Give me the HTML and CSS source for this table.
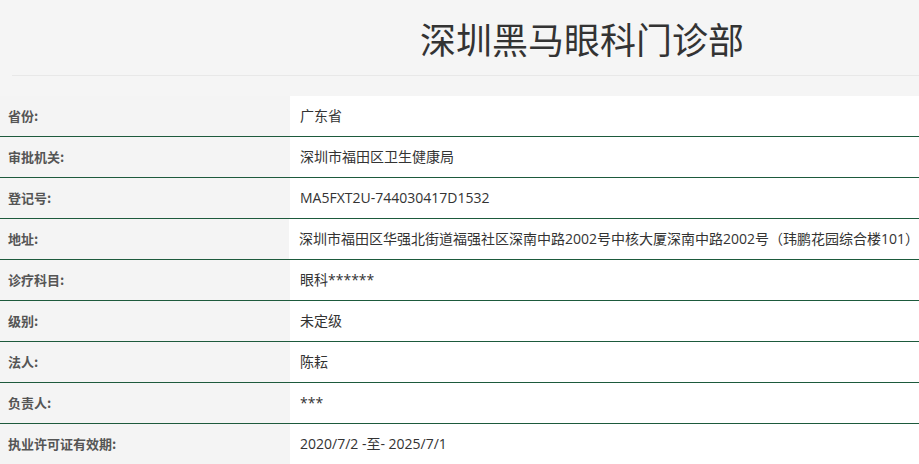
FILE: index.html
```html
<!DOCTYPE html>
<html lang="zh">
<head>
<meta charset="utf-8">
<link rel="stylesheet" href="styles.css">
</head>
<body>
<div class="page">
  <header class="head">
    <h1 class="title">深圳黑马眼科门诊部</h1>
    <div class="rule"></div>
  </header>
  <div class="table">
    <div class="row"><div class="k">省份:</div><div class="v">广东省</div></div>
    <div class="row"><div class="k">审批机关:</div><div class="v">深圳市福田区卫生健康局</div></div>
    <div class="row"><div class="k">登记号:</div><div class="v">MA5FXT2U-744030417D1532</div></div>
    <div class="row"><div class="k">地址:</div><div class="v">深圳市福田区华强北街道福强社区深南中路2002号中核大厦深南中路2002号（玮鹏花园综合楼101）</div></div>
    <div class="row"><div class="k">诊疗科目:</div><div class="v">眼科******</div></div>
    <div class="row"><div class="k">级别:</div><div class="v">未定级</div></div>
    <div class="row"><div class="k">法人:</div><div class="v">陈耘</div></div>
    <div class="row"><div class="k">负责人:</div><div class="v">***</div></div>
    <div class="row"><div class="k">执业许可证有效期:</div><div class="v">2020/7/2 -至- 2025/7/1</div></div>
  </div>
</div>
</body>
</html>
```
FILE: styles.css
```css
html, body {
  margin: 0;
  padding: 0;
  background: #f5f5f5;
}
body {
  font-family: "Noto Sans CJK SC", "Open Sans", sans-serif;
  color: #333;
}
.page {
  width: 919px;
  height: 464px;
  overflow: hidden;
}
.head {
  height: 96px;
  display: flex;
  flex-direction: column;
}
.title {
  margin: 0;
  padding-left: 245px;
  height: 75px;
  line-height: 76px;
  text-align: center;
  font-size: 36px;
  font-weight: 400;
  color: #333;
}
.rule {
  margin-left: 12px;
  height: 1px;
  background: #e8e8e8;
}
.table {
  display: flex;
  flex-direction: column;
}
.row {
  display: flex;
  height: 40px;
  border-bottom: 1px solid #1d5a3c;
}
.k {
  width: 282px;
  padding-left: 8px;
  padding-bottom: 2px;
  background: #f4f4f4;
  font-size: 13px;
  font-weight: 700;
  color: #555;
  display: flex;
  align-items: center;
}
.v {
  flex: 1;
  padding-left: 10px;
  padding-bottom: 2px;
  background: #fff;
  font-family: "Open Sans", "Noto Sans CJK SC", sans-serif;
  font-size: 14px;
  color: #333;
  display: flex;
  align-items: center;
  white-space: nowrap;
}
```
